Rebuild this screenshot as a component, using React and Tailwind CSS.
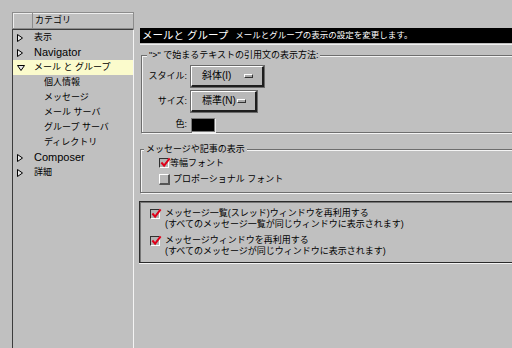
import React from 'react';

const treeRows = [
  { label: '表示', level: 0, arrow: 'right' },
  { label: 'Navigator', level: 0, arrow: 'right' },
  { label: 'メール と グループ', level: 0, arrow: 'down', selected: true },
  { label: '個人情報', level: 1 },
  { label: 'メッセージ', level: 1 },
  { label: 'メール サーバ', level: 1 },
  { label: 'グループ サーバ', level: 1 },
  { label: 'ディレクトリ', level: 1 },
  { label: 'Composer', level: 0, arrow: 'right' },
  { label: '詳細', level: 0, arrow: 'right' },
];

const Arrow = ({ dir }) =>
  dir === 'down' ? (
    <svg width="8" height="6" viewBox="0 0 8 6">
      <polygon points="0.5,0.5 7.5,0.5 4,5.5" fill="#e8e8e8" stroke="#000" strokeWidth="1" />
    </svg>
  ) : (
    <svg width="6" height="8" viewBox="0 0 6 8">
      <polygon points="0.5,0.5 5.5,4 0.5,7.5" fill="#e8e8e8" stroke="#000" strokeWidth="1" />
    </svg>
  );

const CheckBox = ({ checked }) =>
  checked ? (
    <span className="relative inline-block w-[10px] h-[10px] shrink-0 bg-[#b4b4b4] border-t border-l border-t-[#303030] border-l-[#303030] border-b border-r border-b-white border-r-white">
      <svg className="absolute -top-[2px] left-0" width="11" height="11" viewBox="0 0 12 12">
        <path d="M1.5 6 L4.5 9.5 L10.5 1.5" fill="none" stroke="#e0001a" strokeWidth="2.2" />
      </svg>
    </span>
  ) : (
    <span className="inline-block w-[11px] h-[11px] shrink-0 bg-[#b8b8b8] border-t border-l border-t-white border-l-white border-b-2 border-r-2 border-b-[#555] border-r-[#555]" />
  );

const OptionButton = ({ label, width }) => (
  <div
    className={`${width} h-[21px] flex items-center justify-between pl-[10px] pr-[9px] bg-[#b8b8b8] border-t border-l border-t-white border-l-white border-b-2 border-r-2 border-b-[#1e1e1e] border-r-[#1e1e1e] outline outline-1 outline-[#6a6a6a]`}
  >
    <span className="text-[10px] leading-none">{label}</span>
    <span className="w-[9px] h-[4px] bg-[#a8a8a8] border-t border-l border-white border-b border-r border-b-[#333] border-r-[#333]" />
  </div>
);

export default function App() {
  return (
    <div className="w-[512px] h-[348px] bg-[#c0c0c0] flex pt-3 pl-3 overflow-hidden text-black font-['Liberation_Sans','Noto_Sans_CJK_JP',sans-serif]">
      {/* category tree */}
      <div className="w-[122px] shrink-0 flex flex-col">
        <div className="h-[17px] flex border border-[#8c8c8c] shadow-[inset_1px_1px_0_#eee]">
          <div className="w-[20px] border-r border-[#8c8c8c]" />
          <div className="flex items-center pl-[2px] text-[9px] leading-none">カテゴリ</div>
        </div>
        <div className="flex-1 border-l border-t border-[#3c3c3c] border-r border-r-[#f4f4f4]">
          {treeRows.map((row) => (
            <div
              key={row.label}
              className={`h-[15px] flex items-center ${row.selected ? 'bg-[#fbfbcc]' : ''}`}
            >
              <div className="w-[21px] pl-[4px] flex items-center">
                {row.arrow && <Arrow dir={row.arrow} />}
              </div>
              <span className={`text-[9px] leading-none ${row.level ? 'pl-[10px]' : ''} ${/[A-Za-z]/.test(row.label) ? 'text-[11px]' : ''}`}>
                {row.label}
              </span>
            </div>
          ))}
        </div>
      </div>

      {/* settings */}
      <div className="w-[400px] shrink-0 ml-[6px] mt-4 flex flex-col">
        <div className="h-[15px] bg-black text-white flex items-center pl-[2px] gap-[7px]">
          <span className="text-[10.5px] leading-none">メールと グループ</span>
          <span className="text-[8.5px] leading-none">メールとグループの表示の設定を変更します。</span>
        </div>
        <div className="h-[1px] mt-[1px] bg-[#f0f0f0]" />

        <fieldset className="mt-[5px] ml-[1px] h-[83px] border border-[#6e6e6e] shadow-[inset_1px_1px_0_#f4f4f4,1px_1px_0_#f4f4f4]">
          <legend className="ml-[5px] px-[2px] bg-[#c0c0c0] text-[9px] leading-[11px]">"&gt;" で始まるテキストの引用文の表示方法:</legend>
          <div className="grid grid-cols-[45px_auto] gap-x-[4px] items-center mt-[5px]">
            <span className="text-[9px] text-right">スタイル:</span>
            <OptionButton label="斜体(I)" width="w-[73px]" />
            <span className="text-[9px] text-right mt-[4px]">サイズ:</span>
            <div className="mt-[4px]">
              <OptionButton label="標準(N)" width="w-[66px]" />
            </div>
            <span className="text-[9px] text-right mt-[6px]">色:</span>
            <div className="mt-[6px] w-[24px] h-[14px] bg-black border border-[#7a7a7a] shadow-[1px_1px_0_#eee]" />
          </div>
        </fieldset>

        <fieldset className="mt-[11px] h-[49px] border border-[#6e6e6e] shadow-[inset_1px_1px_0_#f4f4f4,1px_1px_0_#f4f4f4]">
          <legend className="ml-[3px] px-[2px] bg-[#c0c0c0] text-[9px] leading-[11px]">メッセージや記事の表示</legend>
          <div className="flex flex-col gap-[6px] pl-[18px] pt-[3px]">
            <label className="flex items-center gap-[1px] text-[9px] leading-none">
              <CheckBox checked />
              <span>等幅フォント</span>
            </label>
            <label className="flex items-center gap-[3px] text-[9px] leading-none">
              <CheckBox />
              <span>プロポーショナル フォント</span>
            </label>
          </div>
        </fieldset>

        <div className="mt-[8px] -ml-[1px] h-[62px] border border-[#2a2a2a] shadow-[inset_1px_1px_0_#777,0_1px_0_#f4f4f4] pl-[10px] pt-[6px] flex flex-col gap-[5px]">
          <div className="flex items-start gap-[5px] text-[9px] leading-[11px]">
            <div className="mt-[1px]"><CheckBox checked /></div>
            <div>
              <div>メッセージ一覧(スレッド)ウィンドウを再利用する</div>
              <div>(すべてのメッセージ一覧が同じウィンドウに表示されます)</div>
            </div>
          </div>
          <div className="flex items-start gap-[5px] text-[9px] leading-[11px]">
            <div className="mt-[1px]"><CheckBox checked /></div>
            <div>
              <div>メッセージウィンドウを再利用する</div>
              <div>(すべてのメッセージが同じウィンドウに表示されます)</div>
            </div>
          </div>
        </div>
      </div>
    </div>
  );
}
